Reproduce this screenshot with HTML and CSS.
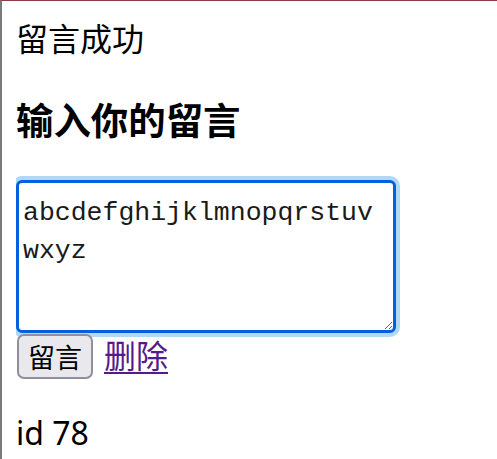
FILE: index.html
```html
<!DOCTYPE html>
<html lang="zh">
<head>
<meta charset="utf-8">
<title>留言</title>
<link rel="stylesheet" href="styles.css">
</head>
<body>
<p class="status">留言成功</p>
<h3 class="title">输入你的留言</h3>
<form class="form">
<textarea class="message" name="message">abcdefghijklmnopqrstuv
wxyz</textarea>
<div class="actions">
<button class="submit" type="button">留言</button>
<a class="delete" href="#">删除</a>
</div>
</form>
<p class="ident">id 78</p>
</body>
</html>
```
FILE: styles.css
```css
html {
  border-top: 1px solid #8e3b47;
  border-left: 2px solid #7a7a7a;
  background: #ffffff;
  min-height: 100%;
  box-sizing: border-box;
}

body {
  margin: 0 0 0 14px;
  font-family: "Noto Sans CJK SC", "Noto Sans", sans-serif;
  color: #000000;
}

.status {
  margin: 16px 0 0;
  font-size: 32px;
  line-height: 40px;
}

.title {
  margin: 39px 0 38px;
  font-size: 37.44px;
  line-height: 46px;
  font-weight: 700;
}

.form {
  margin: 0;
}

.message {
  display: block;
  box-sizing: border-box;
  width: 380px;
  height: 153px;
  margin: 0 0 1px;
  padding: 11px 4px;
  border: 3px solid #0060df;
  border-radius: 6px;
  box-shadow: 0 0 0 4px #b0d9f5;
  outline: none;
  font-family: "Liberation Mono", monospace;
  font-size: 26.5px;
  line-height: 38px;
  font-weight: 400;
  color: #1a1a1a;
  background: #ffffff;
  overflow: hidden;
}

.actions {
  display: flex;
  align-items: baseline;
  gap: 11px;
}

.submit {
  margin: 0 0 0 1px;
  padding: 3px 9px;
  border: 2px solid #8f8f9d;
  border-radius: 7px;
  background: #e9e9ed;
  font-family: "Noto Sans CJK SC", sans-serif;
  font-size: 27px;
  line-height: 35px;
  color: #000000;
}

.delete {
  font-size: 32px;
  line-height: 35px;
  color: #551a8b;
  text-decoration: underline;
  text-underline-offset: 4px;
  text-decoration-thickness: 2px;
}

.ident {
  margin: 32px 0 0;
  font-family: "Noto Sans", sans-serif;
  font-size: 32px;
  line-height: 44px;
}
```
